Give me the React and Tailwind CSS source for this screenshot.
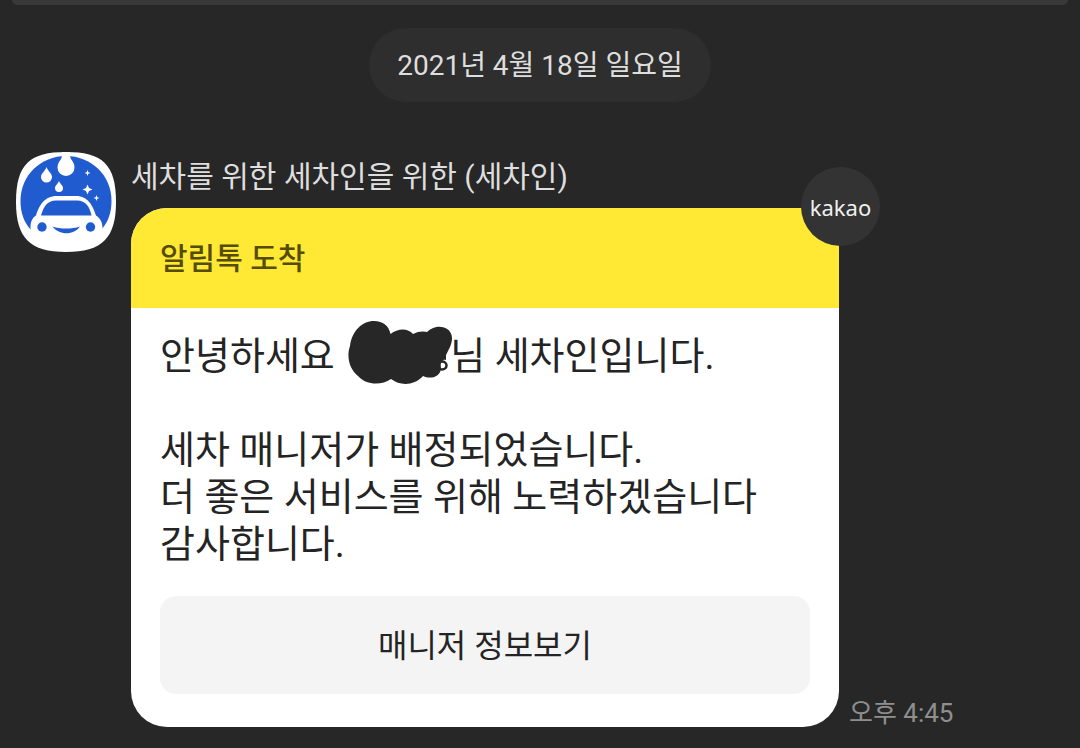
function CarWashLogo() {
  return (
    <svg viewBox="0 0 100 100" className="size-[100px] shrink-0" role="img" aria-label="세차인">
      <path
        d="M50 0C86 0 100 12 100 50C100 86 86 100 50 100C14 100 0 86 0 50C0 12 14 0 50 0Z"
        fill="#fff"
      />
      <path
        d="M15.500 78.500C8 71 4.500 60.500 4.500 49C4.500 23 25 4 50 4C75 4 95.500 23 95.500 49C95.500 60.500 92 71 84.500 78.500Z"
        fill="#215bd0"
      />
      <path
        d="M46 0H54C54 3 54 5 55 7C57 10 58.500 12 58.500 15.500A8.500 8.500 0 0 1 41.500 15.500C41.500 12 43 10 45 7C46 5 46 3 46 0Z"
        fill="#fff"
      />
      <path d="M30.500 15C31.800 19 36 21.500 36 25A5.500 5.500 0 0 1 25 25C25 21.500 29.200 19 30.500 15Z" fill="#fff" />
      <path d="M43 29C44 32 47 33.500 47 36A4 4 0 0 1 39 36C39 33.500 42 32 43 29Z" fill="#fff" />
      <path d="M71.500 18L72.300 20.200L74.500 21L72.300 21.800L71.500 24L70.700 21.800L68.500 21L70.700 20.200Z" fill="#fff" />
      <path d="M71.500 32.500L73 36L76.500 37.500L73 39L71.500 42.500L70 39L66.500 37.500L70 36Z" fill="#fff" />
      <path d="M80.500 43L81.300 45.200L83.500 46L81.300 46.800L80.500 49L79.700 46.800L77.500 46L79.700 45.200Z" fill="#fff" />
      <path
        d="M14.500 82V76C14.500 70 16 66 20 63.500C23 54 28 44 41 44H60C72 44 77 54 80 63.500C84 66 86.500 70 86.500 76V82C86.500 90 14.500 90 14.500 82Z"
        fill="#fff"
      />
      <path d="M25 63.500C27.500 55 31 48.500 40 48.500H61C70 48.500 73.500 55 75.500 63.500Z" fill="#215bd0" />
      <circle cx="26" cy="75" r="4.700" fill="#215bd0" />
      <circle cx="74.500" cy="75" r="4.700" fill="#215bd0" />
      <path d="M36.500 74.500C44 77.300 56 77.300 64 74.500C58 83.500 43 83.500 36.500 74.500Z" fill="#215bd0" />
    </svg>
  );
}

function NameScribble() {
  return (
    <svg viewBox="0 0 108 66" className="absolute -top-3.5 left-0.5 h-[66px] w-[108px]" aria-hidden="true">
      <ellipse cx="96" cy="46.500" rx="4.500" ry="4" fill="none" stroke="#272727" strokeWidth="2.500" />
      <path
        d="M4 27C6 12 16 2 28 2C37 2 43 7 44.500 15C52 9 62 9 67 15C72 12 78 12 81 13C87 7 94 7 98 8.500C106 11 108 19 104 28L100 36V41C96 40 94 44 95 49C95 57 86 61 77 57C68 67 54 67 45 60C35 67 20 66 12 57C4 51 0 38 4 27Z"
        fill="#272727"
      />
    </svg>
  );
}

export default function App() {
  return (
    <main className="min-h-screen bg-[#272727] pb-5 font-[Roboto,'Noto_Sans_CJK_KR',sans-serif] text-[#dedede]">
      <div className="mx-3 h-[5px] rounded-b-md bg-[#393939]" />

      <div className="mt-[23px] flex justify-center">
        <time
          dateTime="2021-04-18"
          className="rounded-full bg-[#2e2e2e] px-7 pt-[17px] pb-[15px] text-[28px] leading-[42px]"
        >
          2021년 4월 18일 일요일
        </time>
      </div>

      <article className="mt-[50px] flex items-start px-4">
        <CarWashLogo />
        <div className="ml-[15px] min-w-0">
          <h1 className="h-14 text-[30px] leading-[50px]">세차를 위한 세차인을 위한 (세차인)</h1>
          <div className="flex items-end gap-[10px]">
            <div className="relative w-[708px]">
              <section className="overflow-hidden rounded-[36px] bg-white text-[#242424]">
                <h2 className="bg-[#ffe934] px-[29px] pt-[27px] pb-[25px] text-[30px] leading-[48px] font-medium text-[#554c00]">
                  알림톡 도착
                </h2>
                <div className="px-[29px] pt-[25px] pb-[33px]">
                  <div className="text-[38px] leading-[47px] whitespace-nowrap">
                    <p>
                      안녕하세요{" "}
                      <span className="relative inline-block h-[47px] w-[106px] align-top">
                        <NameScribble />
                      </span>
                      님 세차인입니다.
                    </p>
                    <p className="mt-[47px]">세차 매니저가 배정되었습니다.</p>
                    <p>더 좋은 서비스를 위해 노력하겠습니다</p>
                    <p>감사합니다.</p>
                  </div>
                  <button
                    type="button"
                    className="mt-7 block w-full rounded-2xl bg-[#f4f4f4] pt-[25px] pb-[23px] text-[32px] leading-[50px]"
                  >
                    매니저 정보보기
                  </button>
                </div>
              </section>
              <span className="absolute -top-[41px] -right-[41px] flex size-[79px] items-center justify-center rounded-full bg-[#333333] font-['Noto_Sans',sans-serif] text-[22px] leading-8 text-[#f0f0f0]">
                kakao
              </span>
            </div>
            <time dateTime="16:45" className="text-[26px] leading-[28px] whitespace-nowrap text-[#8f8f8f]">
              오후 4:45
            </time>
          </div>
        </div>
      </article>
    </main>
  );
}
